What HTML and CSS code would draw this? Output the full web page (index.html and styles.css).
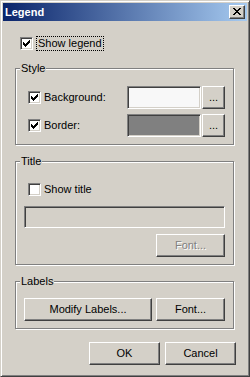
FILE: index.html
```html
<!DOCTYPE html>
<html lang="en">
<head>
    <meta charset="UTF-8">
    <meta name="viewport" content="width=device-width, initial-scale=1.0">
    <title>Legend</title>
    <link rel="stylesheet" href="styles.css">
</head>
<body>
    <div class="window">
        <div class="titlebar">
            <span class="title">Legend</span>
            <button class="btn close-btn" aria-label="Close">
                <svg width="8" height="7" viewBox="0 0 8 7"><path d="M0 0h2v1h-2z M6 0h2v1h-2z M1 1h2v1h-2z M5 1h2v1h-2z M2 2h4v1h-4z M3 3h2v1h-2z M2 4h4v1h-4z M1 5h2v1h-2z M5 5h2v1h-2z M0 6h2v1h-2z M6 6h2v1h-2z" fill="#000"/></svg>
            </button>
        </div>

        <div class="content">
            <label class="check-row show-legend">
                <span class="checkbox"><svg width="11" height="11" viewBox="0 0 11 11"><path d="M2 4h1v3h-1z M3 5h1v3h-1z M4 6h1v3h-1z M5 5h1v3h-1z M6 4h1v3h-1z M7 3h1v3h-1z M8 2h1v3h-1z" fill="#000"/></svg></span>
                <span class="focus-text">Show legend</span>
            </label>

            <fieldset class="group style-group">
                <legend>Style</legend>
                <div class="color-row">
                    <label class="check-row">
                        <span class="checkbox"><svg width="11" height="11" viewBox="0 0 11 11"><path d="M2 4h1v3h-1z M3 5h1v3h-1z M4 6h1v3h-1z M5 5h1v3h-1z M6 4h1v3h-1z M7 3h1v3h-1z M8 2h1v3h-1z" fill="#000"/></svg></span>
                        <span class="check-text">Background:</span>
                    </label>
                    <span class="sunken color-field swatch-light"></span>
                    <button class="btn dots-btn">...</button>
                </div>
                <div class="color-row">
                    <label class="check-row">
                        <span class="checkbox"><svg width="11" height="11" viewBox="0 0 11 11"><path d="M2 4h1v3h-1z M3 5h1v3h-1z M4 6h1v3h-1z M5 5h1v3h-1z M6 4h1v3h-1z M7 3h1v3h-1z M8 2h1v3h-1z" fill="#000"/></svg></span>
                        <span class="check-text">Border:</span>
                    </label>
                    <span class="sunken color-field swatch-gray"></span>
                    <button class="btn dots-btn">...</button>
                </div>
            </fieldset>

            <fieldset class="group title-group">
                <legend>Title</legend>
                <div class="group-body">
                    <label class="check-row">
                        <span class="checkbox"></span>
                        <span class="check-text">Show title</span>
                    </label>
                    <div class="sunken title-input"></div>
                    <button class="btn font-btn disabled">Font...</button>
                </div>
            </fieldset>

            <fieldset class="group labels-group">
                <legend>Labels</legend>
                <div class="button-row">
                    <button class="btn modify-btn">Modify Labels...</button>
                    <button class="btn font-btn">Font...</button>
                </div>
            </fieldset>

            <div class="dialog-buttons">
                <button class="btn dialog-btn">OK</button>
                <button class="btn dialog-btn">Cancel</button>
            </div>
        </div>
    </div>
</body>
</html>
```

FILE: styles.css
```css
* {
    box-sizing: border-box;
}

body {
    margin: 0;
    font-family: "Liberation Sans", Arial, sans-serif;
    font-size: 11px;
    color: #000;
    background-color: #d4d0c8;
}

.window {
    width: 250px;
    height: 377px;
    background-color: #d4d0c8;
    border: 1px solid;
    border-color: #d4d0c8 #404040 #404040 #d4d0c8;
    box-shadow: inset 1px 1px #fff, inset -1px -1px #808080;
    padding: 2px;
    display: flex;
    flex-direction: column;
}

.titlebar {
    height: 18px;
    background: linear-gradient(to right, #0a246a, #a6caf0);
    display: flex;
    align-items: center;
    justify-content: space-between;
    padding: 0 2px;
}

.title {
    color: #fff;
    font-weight: bold;
    line-height: 13px;
}

.btn {
    background-color: #d4d0c8;
    border: 1px solid;
    border-color: #fff #404040 #404040 #fff;
    box-shadow: inset -1px -1px #808080;
    font: inherit;
    color: #000;
    padding: 0;
    height: 23px;
    line-height: 13px;
}

.close-btn {
    width: 16px;
    height: 14px;
    display: flex;
    align-items: center;
    justify-content: center;
    padding: 0 1px 1px 0;
}

.sunken {
    border: 1px solid;
    border-color: #808080 #fff #fff #808080;
    box-shadow: inset 1px 1px #404040, inset -1px -1px #d4d0c8;
}

.content {
    padding: 15px 11px 0 12px;
    display: flex;
    flex-direction: column;
}

.check-row {
    display: flex;
    align-items: center;
    line-height: 13px;
}

.checkbox {
    width: 13px;
    height: 13px;
    flex-shrink: 0;
    background-color: #fff;
    border: 1px solid;
    border-color: #808080 #fff #fff #808080;
    box-shadow: inset 1px 1px #404040, inset -1px -1px #d4d0c8;
    display: flex;
}

.check-text {
    margin-left: 3px;
}

.show-legend {
    height: 15px;
    margin-left: 5px;
}

.focus-text {
    margin-left: 3px;
    padding: 0 1px;
    border: 1px dotted #000;
}

.group {
    margin: 11px 2px 0 0;
    padding: 0 8px 7px 8px;
    border: 1px solid #808080;
    box-shadow: inset 1px 1px #fff, 1px 1px #fff;
    min-width: 0;
}

.group legend {
    padding: 0 1px;
    margin-left: -4px;
    line-height: 13px;
    background-color: #d4d0c8;
}

.group .check-row {
    margin-left: 4px;
}

.style-group {
    padding-top: 11px;
}

.color-row {
    display: flex;
    align-items: center;
    height: 23px;
}

.color-row + .color-row {
    margin-top: 5px;
}

.color-row .check-row {
    flex: 1;
}

.color-field {
    width: 74px;
    height: 23px;
    margin-right: 1px;
}

.swatch-light {
    background-color: #f8f8f8;
}

.swatch-gray {
    background-color: #808080;
}

.dots-btn {
    width: 23px;
}

.title-group {
    margin-top: 10px;
    padding-top: 15px;
}

.group-body {
    display: flex;
    flex-direction: column;
}

.title-input {
    height: 22px;
    margin-top: 10px;
    background-color: #d4d0c8;
}

.font-btn {
    width: 69px;
}

.group-body .font-btn {
    align-self: flex-end;
    margin-top: 6px;
}

.disabled {
    color: #808080;
    text-shadow: 1px 1px #fff;
}

.labels-group {
    margin-top: 10px;
    padding-top: 10px;
}

.button-row {
    display: flex;
    justify-content: space-between;
}

.modify-btn {
    width: 128px;
}

.dialog-buttons {
    display: flex;
    justify-content: flex-end;
    gap: 5px;
    margin-top: 13px;
}

.dialog-btn {
    width: 71px;
}
```
